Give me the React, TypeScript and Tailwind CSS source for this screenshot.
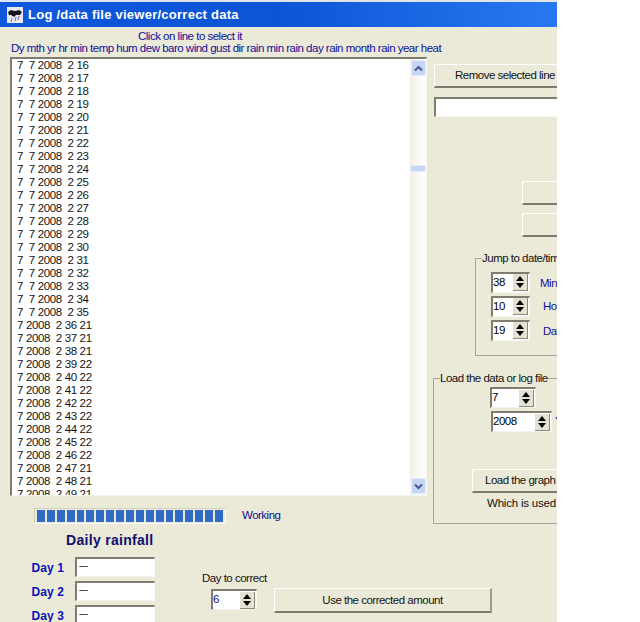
import type { ReactNode } from 'react';

const firstLines = Array.from({ length: 20 }, (_, i) => `7  7 2008  2 ${16 + i}`);
const temps = [21, 21, 21, 22, 22, 22, 22, 22, 22, 22, 22, 21, 21, 21];
const laterLines = temps.map((t, i) => `7 2008  2 ${36 + i} ${t}`);
const lines = [...firstLines, ...laterLines];

// raised XP classic button
function Btn({ className, children }: { className: string; children?: ReactNode }) {
  return (
    <div
      className={`flex items-center justify-center shrink-0 whitespace-nowrap bg-[#ebe9d8] pt-[1px] border-t border-l border-t-white border-l-white border-b-2 border-r-2 border-b-[#7d7b6c] border-r-[#9d9b8c] ${className}`}
    >
      {children}
    </div>
  );
}

function Sunken({ className, children }: { className: string; children?: ReactNode }) {
  return (
    <div
      className={`bg-white shrink-0 border-t-2 border-l-2 border-t-[#7f7d70] border-l-[#7f7d70] border-b border-r border-b-[#f6f5ee] border-r-[#f6f5ee] ${className}`}
    >
      {children}
    </div>
  );
}

function Spinner({ value, className, text = 'text-black' }: { value: string; className: string; text?: string }) {
  return (
    <Sunken className={`flex items-center justify-between pr-[1px] ${className}`}>
      <span className={`leading-none ${text}`}>{value}</span>
      <span className="flex flex-col w-[15px] h-[17px] bg-[#e4e2d2] border-r border-b border-[#8a8878] items-center justify-center gap-[2px]">
        <span className="w-0 h-0 border-x-[4px] border-x-transparent border-b-[5px] border-b-black" />
        <span className="w-0 h-0 border-x-[4px] border-x-transparent border-t-[5px] border-t-black" />
      </span>
    </Sunken>
  );
}

function ChevronBtn({ up }: { up?: boolean }) {
  return (
    <div className="flex items-center justify-center w-[15px] h-[16px] shrink-0 rounded-[2px] bg-[#c6d4f6] border border-[#e6edfc]">
      <svg width="9" height="7" viewBox="0 0 9 7">
        <path d={up ? 'M1 5.5 L4.5 2 L8 5.5' : 'M1 1.5 L4.5 5 L8 1.5'} fill="none" stroke="#47568f" strokeWidth="2" />
      </svg>
    </div>
  );
}

function DayField({ label, top }: { label: string; top: string }) {
  return (
    <div className={`flex items-center ${top}`}>
      <span className="w-[75px] text-right pr-[11px] pt-[1px] font-bold tracking-[0.1px] text-[#0c15b8] text-[12px]">{label}</span>
      <Sunken className="w-[80px] h-[20px] px-[2px] text-[10px] leading-[14px]">---</Sunken>
    </div>
  );
}

function AppIcon() {
  return (
    <svg width="16" height="16" viewBox="0 0 16 16" className="shrink-0 ml-[7px]">
      <rect width="16" height="16" fill="#eceaf0" />
      <path d="M1 5 L4 3 L8 4 L12 3 L15 5 L13 8 L9 8 L7 10 L4 8 L2 8 Z" fill="#15151c" />
      <path d="M5 11 L4 15 M9 10 L8 14 M12 9 L11 13" stroke="#7a5fb8" strokeWidth="1" />
    </svg>
  );
}

export default function App() {
  return (
    <div className="w-[640px] h-[622px] bg-white overflow-hidden font-['Liberation_Sans',Arial,sans-serif] text-[11.5px] tracking-[-0.5px] text-[#141414]">
      <div className="w-[557px] h-[622px] bg-[#ebe9d8] overflow-hidden">
        <div className="h-[2px] bg-[#dfe4ee]" />
        {/* Title bar */}
        <div className="flex items-center h-[25px] bg-gradient-to-r from-[#0f57dc] via-[#0b55d6] to-[#2878f2]">
          <AppIcon />
          <span className="ml-[5px] font-bold text-[13px] tracking-[0.25px] text-white whitespace-nowrap">
            Log /data file viewer/correct data
          </span>
        </div>

        <div className="flex h-[497px]">
          {/* Left: list */}
          <div className="w-[433px] shrink-0">
            <div className="h-[14px] mt-[2px] pl-[138px] text-[#10109a] leading-[14px] whitespace-nowrap">Click on line to select it</div>
            <div className="h-[14px] pl-[11px] text-[#10109a] leading-[11px] whitespace-nowrap">
              Dy mth yr hr min temp hum dew baro wind gust dir rain min rain day rain month rain year heat
            </div>
            <Sunken className="flex ml-[10px] w-[417px] h-[439px]">
              <div className="flex-1 overflow-hidden pl-[5px]">
                {lines.map((l) => (
                  <div key={l} className="h-[13px] leading-[13px] whitespace-pre tracking-[-0.35px]">{l}</div>
                ))}
              </div>
              <div className="flex flex-col justify-between items-center w-[16px] py-[1px] bg-gradient-to-r from-[#f2f0e8] to-[#fefefb] relative">
                <ChevronBtn up />
                <ChevronBtn />
                <div className="absolute left-0 top-[106px] w-[16px] h-[7px] rounded-[2px] bg-[#c6d4f6] border border-[#e6edfc]" />
              </div>
            </Sunken>
            <div className="flex items-center ml-[34px] mt-[11px]">
              <div className="flex gap-[2px] items-center w-[192px] h-[16px] px-[2px] border border-[#d2d0c2] border-b-white border-r-white">
                {Array.from({ length: 19 }, (_, i) => (
                  <span key={i} className="w-[8px] h-[12px] bg-[#316ac5]" />
                ))}
              </div>
              <span className="ml-[16px] text-[#10108c]">Working</span>
            </div>
          </div>

          {/* Right: controls */}
          <div className="flex-1 pt-[37px] min-w-0">
            <Btn className="ml-[1px] w-[200px] h-[24px] justify-start pl-[20px]">Remove selected line</Btn>
            <Sunken className="ml-[1px] mt-[9px] w-[200px] h-[20px]" />
            <Btn className="ml-[89px] mt-[64px] w-[60px] h-[24px]" />
            <Btn className="ml-[89px] mt-[8px] w-[60px] h-[24px]" />

            <fieldset className="ml-[42px] mt-[14px] w-[160px] h-[105px] border border-[#a8a698]">
              <legend className="ml-[6px] px-0 leading-[14px] whitespace-nowrap">Jump to date/time</legend>
              <div className="pl-[15px] pt-[5px]">
                <div className="flex items-center h-[24px]">
                  <Spinner value="38" className="w-[39px] h-[21px]" />
                  <span className="ml-[10px] pt-[3px] text-[#10109a]">Minute</span>
                </div>
                <div className="flex items-center h-[24px]">
                  <Spinner value="10" className="w-[39px] h-[21px]" />
                  <span className="ml-[13px] pt-[2px] text-[#10109a]">Hour</span>
                </div>
                <div className="flex items-center h-[24px]">
                  <Spinner value="19" className="w-[39px] h-[21px]" />
                  <span className="ml-[13px] pt-[3px] text-[#10109a]">Day</span>
                </div>
              </div>
            </fieldset>

            <fieldset className="mt-[15px] w-[200px] h-[153px] border border-[#a8a698]">
              <legend className="ml-[6px] px-0 leading-[14px] whitespace-nowrap">Load the data or log file</legend>
              <div className="pl-[56px] pt-[2px]">
                <Spinner value="7" className="w-[46px] h-[21px]" />
                <div className="flex items-center mt-[3px] pl-[1px]">
                  <Spinner value="2008" className="w-[61px] h-[21px] shrink-0" />
                  <span className="ml-[3px] text-[#10109a]">Year</span>
                </div>
                <Btn className="-ml-[18px] mt-[37px] w-[160px] h-[24px] justify-start pl-[12px]">Load the graph data</Btn>
                <div className="-ml-[3px] mt-[2px] whitespace-nowrap tracking-[-0.2px]">Which is used for</div>
              </div>
            </fieldset>
          </div>
        </div>

        {/* Lower: daily rainfall */}
        <div className="flex">
          <div className="w-[155px] shrink-0">
            <div className="pl-[66px] font-bold text-[#10106e] text-[14px] tracking-[0.3px] leading-[16px] mt-[8px] whitespace-nowrap">Daily rainfall</div>
            <DayField label="Day 1" top="mt-[9px]" />
            <DayField label="Day 2" top="mt-[4px]" />
            <DayField label="Day 3" top="mt-[4px]" />
          </div>
          <div className="ml-[47px] w-[60px] shrink-0 pt-[47px]">
            <div className="leading-[14px] whitespace-nowrap">Day to correct</div>
            <Spinner value="6" text="text-[#10108c]" className="ml-[9px] mt-[4px] w-[46px] h-[21px]" />
          </div>
          <Btn className="ml-[12px] mt-[64px] w-[218px] h-[25px]">Use the corrected amount</Btn>
        </div>
      </div>
    </div>
  );
}
